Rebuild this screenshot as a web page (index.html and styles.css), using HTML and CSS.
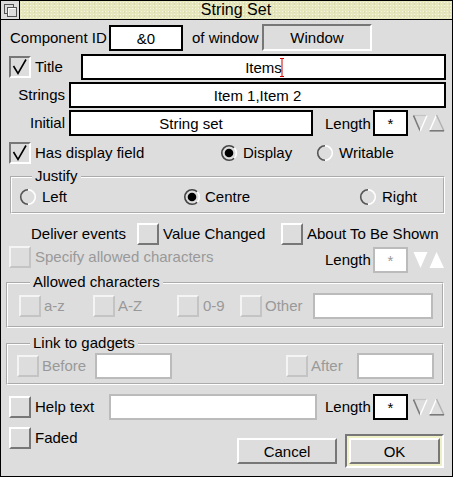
FILE: index.html
```html
<!DOCTYPE html>
<html>
<head>
<meta charset="utf-8">
<title>String Set</title>
<link rel="stylesheet" href="styles.css">
</head>
<body>
<div class="win">
  <div class="titlebar">
    <div class="back">
      <svg width="18" height="18" viewBox="0 0 18 18">
        <rect x="3.5" y="3.5" width="9" height="9" fill="#ddd" stroke="#555"/>
        <rect x="6.5" y="6.5" width="9" height="9" fill="#ddd" stroke="#555"/>
        <path d="M7.5 14.5 V7.5 H14.5" fill="none" stroke="#fff"/>
      </svg>
    </div>
    <div class="title">String Set</div>
  </div>

  <div class="body">
    <div class="row r1">
      <span class="lbl l-compid">Component ID</span>
      <span class="field f-id">&amp;0</span>
      <span class="lbl l-ofwin">of window</span>
      <span class="display f-win">Window</span>
    </div>

    <div class="row r2">
      <span class="opt on first"><svg class="tick" viewBox="0 0 18 18"><polyline points="2.5,8 7,15.5 15,1.5" fill="none" stroke="#000" stroke-width="1.6"/></svg></span>
      <span class="lbl l-title">Title</span>
      <span class="field f-title">Items<span class="caret"><svg width="4" height="19" viewBox="0 0 4 19"><path d="M0 0.5 H4 M2 0.5 V18.5 M0 18.5 H4" stroke="#d00000" stroke-width="1" fill="none"/></svg></span></span>
    </div>

    <div class="row r3">
      <span class="lbl l-right">Strings</span>
      <span class="field f-strings">Item 1,Item 2</span>
    </div>

    <div class="row r4">
      <span class="lbl l-right">Initial</span>
      <span class="field f-initial">String set</span>
      <span class="lbl l-length">Length</span>
      <span class="field f-len">*</span>
      <svg class="adj" width="32" height="18" viewBox="0 0 32 18">
        <path d="M0.5 1.5 H14" stroke="#c4c4c4" stroke-width="1.2" fill="none"/>
        <path d="M0.5 1.5 L7.2 17" stroke="#7a7a7a" stroke-width="1.6" fill="none"/>
        <path d="M14 1.5 L7.2 17" stroke="#ffffff" stroke-width="1.4" fill="none"/>
        <path d="M23.5 1 L16.5 17" stroke="#ffffff" stroke-width="1.4" fill="none"/>
        <path d="M23.5 1 L31 17" stroke="#b0b0b0" stroke-width="1.4" fill="none"/>
        <path d="M16.5 16.8 H31" stroke="#7a7a7a" stroke-width="1.6" fill="none"/>
      </svg>
    </div>

    <div class="row r5">
      <span class="opt on first"><svg class="tick" viewBox="0 0 18 18"><polyline points="2.5,8 7,15.5 15,1.5" fill="none" stroke="#000" stroke-width="1.6"/></svg></span>
      <span class="lbl l-hasdisp">Has display field</span>
      <svg class="radio" width="18" height="18" viewBox="0 0 18 18">
        <circle cx="9" cy="9" r="7.3" fill="#ddd"/>
        <path d="M14.2 14.2 A7.3 7.3 0 1 1 14.2 3.8" stroke="#444" stroke-width="1.6" fill="none"/>
        <path d="M14.2 3.8 A7.3 7.3 0 0 1 14.2 14.2" stroke="#fff" stroke-width="1.6" fill="none"/>
        <circle cx="9" cy="9" r="4.3" fill="#000"/>
      </svg>
      <span class="lbl l-display">Display</span>
      <svg class="radio" width="18" height="18" viewBox="0 0 18 18">
        <circle cx="9" cy="9" r="7.3" fill="#ddd"/>
        <path d="M9 1.7 A7.3 7.3 0 0 0 9 16.3" stroke="#555" stroke-width="1.6" fill="none"/>
        <path d="M9 1.7 A7.3 7.3 0 0 1 9 16.3" stroke="#fff" stroke-width="1.6" fill="none"/>
      </svg>
      <span class="lbl l-writable">Writable</span>
    </div>

    <fieldset class="group g-justify">
      <legend>Justify</legend>
      <div class="row gr-justify">
        <svg class="radio first" width="18" height="18" viewBox="0 0 18 18">
          <circle cx="9" cy="9" r="7.3" fill="#ddd"/>
          <path d="M9 1.7 A7.3 7.3 0 0 0 9 16.3" stroke="#555" stroke-width="1.6" fill="none"/>
          <path d="M9 1.7 A7.3 7.3 0 0 1 9 16.3" stroke="#fff" stroke-width="1.6" fill="none"/>
        </svg>
        <span class="lbl l-left">Left</span>
        <svg class="radio" width="18" height="18" viewBox="0 0 18 18">
          <circle cx="9" cy="9" r="7.3" fill="#ddd"/>
          <path d="M14.2 14.2 A7.3 7.3 0 1 1 14.2 3.8" stroke="#444" stroke-width="1.6" fill="none"/>
          <path d="M14.2 3.8 A7.3 7.3 0 0 1 14.2 14.2" stroke="#fff" stroke-width="1.6" fill="none"/>
          <circle cx="9" cy="9" r="4.3" fill="#000"/>
        </svg>
        <span class="lbl l-centre">Centre</span>
        <svg class="radio" width="18" height="18" viewBox="0 0 18 18">
          <circle cx="9" cy="9" r="7.3" fill="#ddd"/>
          <path d="M9 1.7 A7.3 7.3 0 0 0 9 16.3" stroke="#555" stroke-width="1.6" fill="none"/>
          <path d="M9 1.7 A7.3 7.3 0 0 1 9 16.3" stroke="#fff" stroke-width="1.6" fill="none"/>
        </svg>
        <span class="lbl l-rightj">Right</span>
      </div>
    </fieldset>

    <div class="row r-deliver">
      <span class="lbl l-deliver">Deliver events</span>
      <span class="opt"></span>
      <span class="lbl l-valchg">Value Changed</span>
      <span class="opt"></span>
      <span class="lbl l-atbs">About To Be Shown</span>
    </div>

    <div class="row r-specify">
      <span class="opt faded first top"></span>
      <span class="lbl faint l-specify top">Specify allowed characters</span>
      <span class="lbl l-length">Length</span>
      <span class="field faint f-len bottom">*</span>
      <svg class="adj" width="32" height="18" viewBox="0 0 32 18">
        <polygon points="0.5,1 14.5,1 7.5,17" fill="#fff"/>
        <polygon points="23.5,1 16.5,17 31,17" fill="#fff"/>
      </svg>
    </div>

    <fieldset class="group g-allowed">
      <legend>Allowed characters</legend>
      <div class="row gr-allowed">
        <span class="opt faded a1"></span>
        <span class="lbl faint l-az">a-z</span>
        <span class="opt faded"></span>
        <span class="lbl faint l-AZ">A-Z</span>
        <span class="opt faded"></span>
        <span class="lbl faint l-09">0-9</span>
        <span class="opt faded"></span>
        <span class="lbl faint l-other">Other</span>
        <span class="field faint f-other"></span>
      </div>
    </fieldset>

    <fieldset class="group g-link">
      <legend>Link to gadgets</legend>
      <div class="row gr-link">
        <span class="opt faded k1"></span>
        <span class="lbl faint l-before">Before</span>
        <span class="field faint f-link"></span>
        <span class="opt faded k2"></span>
        <span class="lbl faint l-after">After</span>
        <span class="field faint f-link"></span>
      </div>
    </fieldset>

    <div class="row r-help">
      <span class="opt first"></span>
      <span class="lbl l-help">Help text</span>
      <span class="field faint f-help"></span>
      <span class="lbl l-length l-length-help">Length</span>
      <span class="field f-len">*</span>
      <svg class="adj" width="32" height="18" viewBox="0 0 32 18">
        <path d="M0.5 1.5 H14" stroke="#c4c4c4" stroke-width="1.2" fill="none"/>
        <path d="M0.5 1.5 L7.2 17" stroke="#7a7a7a" stroke-width="1.6" fill="none"/>
        <path d="M14 1.5 L7.2 17" stroke="#ffffff" stroke-width="1.4" fill="none"/>
        <path d="M23.5 1 L16.5 17" stroke="#ffffff" stroke-width="1.4" fill="none"/>
        <path d="M23.5 1 L31 17" stroke="#b0b0b0" stroke-width="1.4" fill="none"/>
        <path d="M16.5 16.8 H31" stroke="#7a7a7a" stroke-width="1.6" fill="none"/>
      </svg>
    </div>

    <div class="row r-bottom">
      <span class="opt first"></span>
      <span class="lbl l-faded">Faded</span>
      <span class="btn b-cancel">Cancel</span>
      <span class="okwrap"><span class="btn b-ok">OK</span></span>
    </div>
  </div>
</div>
</body>
</html>
```

FILE: styles.css
```css
html, body {
  margin: 0;
  padding: 0;
  background: #dddddd;
}

.win {
  box-sizing: border-box;
  width: 453px;
  height: 477px;
  border: 1px solid #000;
  background: #dddddd;
  font-family: "Liberation Sans", Arial, sans-serif;
  font-size: 15px;
  color: #000;
  overflow: hidden;
}

/* ---------- title bar ---------- */
.titlebar {
  display: flex;
  box-sizing: border-box;
  height: 19px;
  border-bottom: 1px solid #000;
}
.back {
  width: 18px;
  height: 18px;
  background: #dddddd;
  border-right: 1px solid #000;
}
.back svg { display: block; }
.title {
  flex: 1;
  height: 18px;
  line-height: 18px;
  text-align: center;
  background-color: #e6e6bd;
  background-image:
    radial-gradient(circle, #f6f6e2 0.7px, transparent 1px),
    radial-gradient(circle, #d9d9ae 0.6px, transparent 0.9px);
  background-size: 3px 3px, 5px 4px;
  background-position: 0 0, 2px 1px;
  font-size: 16px;
}

/* ---------- generic ---------- */
.body {
  display: flex;
  flex-direction: column;
}
.row {
  display: flex;
  align-items: center;
}
.lbl {
  white-space: nowrap;
  line-height: 18px;
}
.faint { color: #999; }

.field {
  box-sizing: border-box;
  height: 26px;
  background: #fff;
  border: 2px solid #000;
  display: flex;
  align-items: center;
  justify-content: center;
  white-space: nowrap;
}
.field.faint { border-color: #bbbbbb; }

.display {
  box-sizing: border-box;
  border: 2px solid;
  border-color: #777 #fff #fff #777;
  background: #dddddd;
  display: flex;
  align-items: center;
  justify-content: center;
}

.opt {
  box-sizing: border-box;
  width: 22px;
  height: 22px;
  flex: none;
  border: 2px solid;
  border-color: #ffffff #777777 #777777 #ffffff;
  background: #dddddd;
}
.opt.on { border-color: #777777 #ffffff #ffffff #777777; }
.opt.faded { border-color: #f4f4f4 #c4c4c4 #c4c4c4 #f4f4f4; }
.tick { display: block; width: 18px; height: 18px; }

.radio { flex: none; display: block; }
.adj { flex: none; display: block; margin-left: 5px; }

.caret {
  display: inline-block;
  width: 4px;
  height: 19px;
  margin-left: -2px;
  margin-right: -2px;
}
.caret svg { display: block; }

.first { margin-left: 8px; }
.top { align-self: flex-start; }
.bottom { align-self: flex-end; }

/* ---------- row 1 ---------- */
.r1 { margin-top: 4px; height: 27px; }
.l-compid { margin-left: 9px; width: 99px; }
.f-id { width: 74px; height: 26px; align-self: flex-end; }
.l-ofwin { margin-left: 9px; width: 70px; }
.f-win { width: 110px; height: 27px; }

/* ---------- title / strings / initial ---------- */
.r2 { margin-top: 3px; height: 26px; }
.l-title { margin-left: 4px; width: 46px; }
.f-title { width: 365px; }

.r3 { margin-top: 2px; height: 26px; }
.l-right { width: 64px; text-align: right; }
.f-strings { margin-left: 4px; width: 377px; }

.r4 { margin-top: 2px; height: 26px; }
.f-initial { margin-left: 4px; width: 244px; }
.l-length { margin-left: 12px; width: 48px; padding-top: 2px; }
.f-len { width: 35px; }

/* ---------- has display ---------- */
.r5 { margin-top: 6px; height: 22px; }
.l-hasdisp { margin-left: 4px; width: 185px; }
.l-display { margin-left: 5px; width: 73px; }
.l-writable { margin-left: 5px; }

/* ---------- groups ---------- */
.group {
  margin: 0;
  padding: 0;
  min-width: 0;
  box-sizing: border-box;
  border: 2px groove #ffffff;
}
.group legend {
  padding: 0 3px;
  height: 18px;
  line-height: 16px;
}

.g-justify { margin: 4px 0 0 9px; width: 435px; padding-bottom: 4px; }
.g-justify legend { margin-left: 20px; }
.gr-justify { height: 22px; }
.gr-justify .first { margin-left: 7px; }
.l-left { margin-left: 5px; width: 141px; }
.l-centre { margin-left: 4px; width: 154px; }
.l-rightj { margin-left: 5px; }

.g-allowed { margin: 1px 0 0 5px; width: 438px; padding-top: 1px; padding-bottom: 7px; }
.g-allowed legend { margin-left: 22px; }
.gr-allowed { height: 26px; }
.a1 { margin-left: 11px; }
.l-az { margin-left: 3px; width: 49px; }
.l-AZ { margin-left: 3px; width: 59px; }
.l-09 { margin-left: 4px; width: 37px; }
.l-other { margin-left: 3px; width: 48px; }
.f-other { width: 120px; }

.g-link { margin: 7px 0 0 5px; width: 438px; padding-bottom: 4px; }
.g-link legend { margin-left: 22px; }
.gr-link { height: 26px; }
.k1 { margin-left: 9px; }
.l-before { margin-left: 3px; width: 53px; }
.f-link { width: 77px; }
.k2 { margin-left: 114px; }
.l-after { margin-left: 3px; width: 46px; }

/* ---------- deliver / specify ---------- */
.r-deliver { margin-top: 9px; height: 22px; }
.l-deliver { margin-left: 30px; width: 106px; }
.l-valchg { margin-left: 4px; width: 118px; }
.l-atbs { margin-left: 4px; }

.r-specify { margin-top: 1px; height: 27px; }
.l-specify { margin-left: 4px; width: 290px; line-height: 22px; }
.r-specify .l-length { margin-left: 0; padding-top: 0; }

/* ---------- help ---------- */
.r-help { margin-top: 9px; height: 26px; }
.l-help { margin-left: 4px; width: 74px; }
.f-help { width: 208px; }
.l-length-help { margin-left: 8px; padding-top: 0; }

/* ---------- bottom ---------- */
.r-bottom { margin-top: 7px; height: 41px; align-items: flex-start; }
.l-faded { margin-left: 4px; width: 202px; line-height: 22px; }

.btn {
  box-sizing: border-box;
  border: 2px solid;
  border-color: #ffffff #777777 #777777 #ffffff;
  background: #dddddd;
  display: flex;
  align-items: center;
  justify-content: center;
}
.b-cancel { width: 100px; height: 26px; margin-top: 11px; }
.okwrap {
  box-sizing: border-box;
  width: 99px;
  height: 34px;
  margin-top: 7px;
  margin-left: 8px;
  border: 2px solid;
  border-color: #777777 #ffffff #ffffff #777777;
  background: #efefc8;
  padding: 2px;
  display: flex;
}
.b-ok { flex: 1; }
```
